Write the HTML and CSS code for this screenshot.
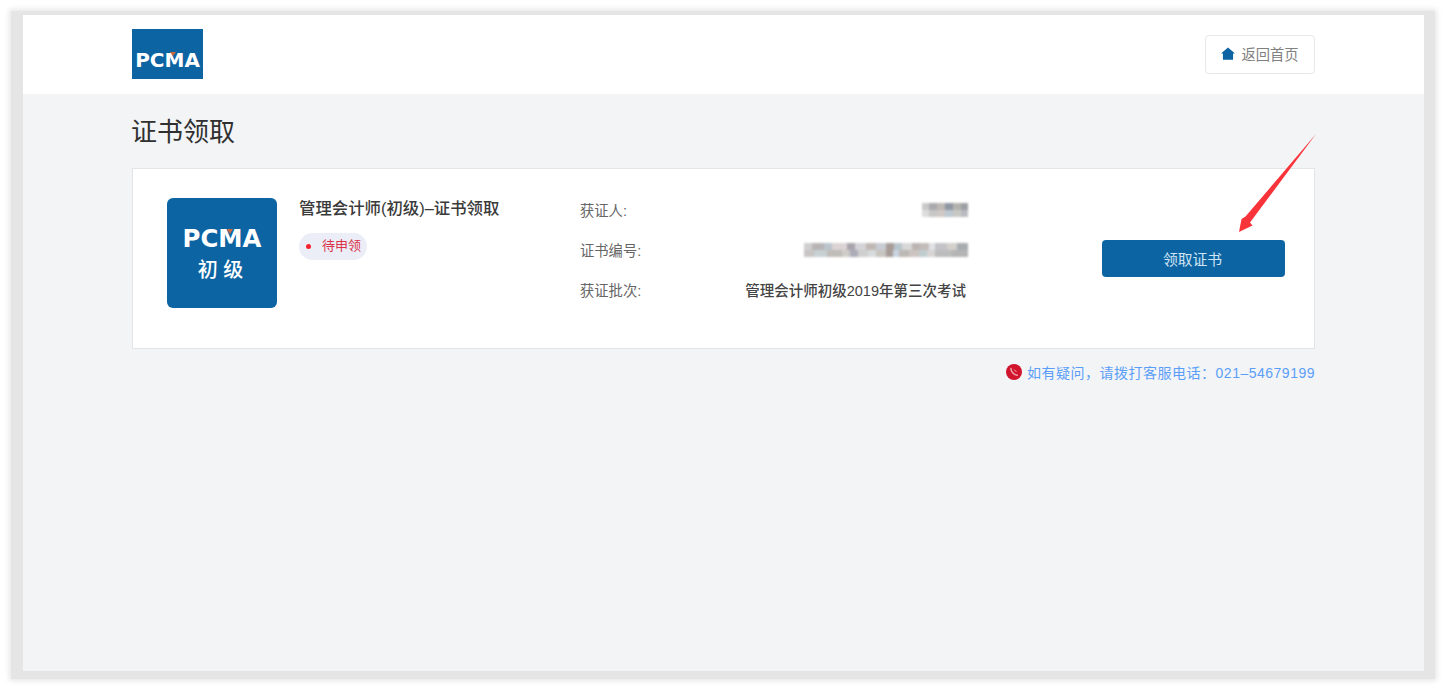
FILE: index.html
```html
<!DOCTYPE html>
<html lang="zh-CN">
<head>
<meta charset="utf-8">
<title>证书领取</title>
<link rel="stylesheet" href="styles.css">
</head>
<body>
<div class="shadow">
  <div class="screen">
    <header class="topbar">
      <div class="wrap topbar-inner">
        <div class="logo"><span class="logo-text">PCMA</span><i class="notch"></i></div>
        <a class="home-btn">
          <svg class="home-icon" viewBox="0 0 16 14" width="14" height="13"><path fill="#0d64a3" d="M8 0 L16 7 L13.8 7 L13.8 14 L2.2 14 L2.2 7 L0 7 Z"/></svg>
          <span>返回首页</span>
        </a>
      </div>
    </header>
    <main class="wrap">
      <h1 class="page-title">证书领取</h1>
      <section class="card">
        <div class="badge">
          <div class="badge-logo"><span class="badge-text">PCMA</span><i class="badge-notch"></i></div>
          <div class="badge-level">初 级</div>
        </div>
        <div class="summary">
          <div class="summary-title">管理会计师(初级)–证书领取</div>
          <div class="tag"><i class="dot"></i><span>待申领</span></div>
        </div>
        <div class="info">
          <div class="row"><span class="label">获证人:</span><span class="blur blur-name"></span></div>
          <div class="row"><span class="label">证书编号:</span><span class="blur blur-no"></span></div>
          <div class="row"><span class="label">获证批次:</span><span class="value">管理会计师初级2019年第三次考试</span></div>
        </div>
        <button class="claim">领取证书</button>
      </section>
      <div class="help">
        <svg class="phone" viewBox="0 0 16 16" width="16" height="16"><circle cx="8" cy="8" r="8" fill="#d0152c"/><path fill="none" stroke="#f0a7b0" stroke-width="1.5" stroke-linecap="round" d="M5 4.6 C4.8 7.6 8 11.2 11.3 11.2"/><path fill="none" stroke="#f0a7b0" stroke-width="1" d="M8 5.5 L10.5 8"/></svg>
        <span>如有疑问，请拨打客服电话：021–54679199</span>
      </div>
    </main>
    <svg class="arrow" viewBox="1236 130 84 106" width="84" height="106"><path fill="#f9333a" d="M1316 134 L1250 222.5 L1252.5 225.5 L1239 232 L1241.5 219 L1245.5 216.5 Z"/></svg>
  </div>
</div>
</body>
</html>
```
FILE: styles.css
```css
* { box-sizing: border-box; }
html, body { margin: 0; padding: 0; height: 100%; background: #fff; overflow: hidden; }
body {
  padding: 11px 13px 9px 11px;
  font-family: "Liberation Sans", "Noto Sans CJK SC", sans-serif;
  color: #333;
}
.shadow {
  height: 668px;
  padding: 4px 11px 8px 12px;
  background: #e5e5e5;
  box-shadow: 0 0 5px 2px #e8e8e8;
}
.screen {
  position: relative;
  height: 656px;
  background: #f3f4f6;
}
.wrap { width: 1183px; margin-left: 109px; }
.topbar { height: 79px; background: #fff; }
.topbar-inner { height: 79px; display: flex; justify-content: space-between; padding-top: 14px; }
.logo {
  position: relative;
  width: 71px;
  height: 50px;
  background: #0d64a3;
  display: flex;
  align-items: center;
  justify-content: center;
  padding-top: 11px;
}
.logo-text { font: 700 20px/1 "DejaVu Sans", sans-serif; color: #fff; }
.notch {
  position: absolute;
  left: 38px;
  top: 23px;
  border-left: 3px solid transparent;
  border-right: 3px solid transparent;
  border-top: 4px solid #c9683c;
}
.home-btn {
  margin-top: 6px;
  width: 110px;
  height: 39px;
  border: 1px solid #e8e8e8;
  border-radius: 4px;
  background: #fff;
  display: flex;
  align-items: center;
  justify-content: center;
  gap: 6px;
  padding-bottom: 2px;
  font-size: 14.3px;
  color: #808080;
}
.home-icon { flex: none; }
.page-title {
  margin: 0 0 0 -1px;
  height: 74px;
  padding-top: 18px;
  font-size: 26px;
  line-height: 40px;
  font-weight: 400;
  color: #303030;
}
.card {
  height: 181px;
  border: 1px solid #e3e4e6;
  background: #fff;
  display: flex;
  align-items: flex-start;
  padding: 29px 0 0 34px;
}
.badge {
  flex: none;
  width: 110px;
  height: 110px;
  border-radius: 6px;
  background: #0d64a3;
  color: #fff;
  display: flex;
  flex-direction: column;
  align-items: center;
  padding-top: 29px;
}
.badge-logo { position: relative; height: 24px; display: flex; align-items: center; }
.badge-text { font: 700 24.4px/24px "DejaVu Sans", sans-serif; color: #fff; }
.badge-notch {
  position: absolute;
  left: 44px;
  top: 2px;
  border-left: 3px solid transparent;
  border-right: 3px solid transparent;
  border-top: 5px solid #c9683c;
}
.badge-level { font-size: 20px; line-height: 26px; font-weight: 500; margin: 6px 3px 0 0; }
.summary { flex: none; width: 281px; margin-left: 22px; }
.summary-title { font-size: 16.4px; line-height: 20px; font-weight: 500; color: #3a3a3a; white-space: nowrap; }
.tag {
  margin-top: 15px;
  width: 68px;
  height: 27px;
  border-radius: 14px;
  background: #eceef7;
  display: flex;
  align-items: center;
  padding-left: 7px;
  gap: 11px;
  font-size: 13px;
  color: #d9324a;
}
.tag span { margin-top: -4px; }
.dot { width: 5px; height: 5px; border-radius: 50%; background: #f5222d; }
.info { flex: none; width: 388px; margin-top: -8px; }
.row { height: 40px; display: flex; justify-content: space-between; align-items: center; }
.label { font-size: 14.3px; color: #666; margin-top: -2px; }
.value { font-size: 14.5px; font-weight: 500; color: #444; margin: -2px 2px 0 0; white-space: nowrap; }
.blur {
  display: block;
  height: 14px;
  filter: blur(1px);
  background-size: 100% 50%, 100% 50%;
  background-repeat: no-repeat;
  background-position: top, bottom;
}
.blur-name {
  width: 46px;
  background-image:
    linear-gradient(90deg, #c9c9c9 0 16%, #a9a9ad 16% 33%, #bdb8b4 33% 50%, #8f97a3 50% 67%, #b4b2ae 67% 84%, #9c9fa3 84%),
    linear-gradient(90deg, #dcdcdc 0 16%, #c7c7c7 16% 33%, #d0c8c4 33% 50%, #bcc8d2 50% 67%, #c8c8c4 67% 84%, #b8bcc0 84%);
}
.blur-no {
  width: 164px;
  background-image:
    linear-gradient(90deg, #cfcfcf 0 5%, #b8b4b4 5% 12%, #b9c4cc 12% 17%, #dcd4d4 17% 26%, #a8a4ac 26% 31%, #d4d4d8 31% 38%, #c0b8b4 38% 44%, #c8ccd4 44% 50%, #a89c98 50% 55%, #b8c4cc 55% 60%, #d8d8d8 60% 66%, #bcb4b4 66% 71%, #c4bcb8 71% 76%, #e0e2e4 76% 80%, #c4c4c8 80% 87%, #d4d0cc 87% 93%, #a8acb0 93%),
    linear-gradient(90deg, #c8c4c4 0 6%, #c8d0d4 6% 14%, #c0bcb8 14% 23%, #d0ccc8 23% 28%, #acacb8 28% 33%, #cfcfd0 33% 39%, #d8dcdc 39% 44%, #c8c4c0 44% 50%, #a89c98 50% 54%, #c8d4e0 54% 58%, #bcb8b4 58% 64%, #ccc4c0 64% 70%, #c0ccd0 70% 75%, #d8d4d4 75% 80%, #bcbcbc 80% 90%, #b4b4b4 90%);
}
.claim {
  flex: none;
  width: 183px;
  height: 37px;
  margin: 42px 0 0 134px;
  padding: 0 2px 1px 0;
  border: 0;
  border-radius: 4px;
  background: #0d64a3;
  color: #cfe4f4;
  font: 400 14.8px "Noto Sans CJK SC", sans-serif;
}
.help {
  margin-top: 13px;
  height: 20px;
  display: flex;
  justify-content: flex-end;
  align-items: center;
  gap: 5px;
  font-size: 14px;
  color: #5b9ef9;
  letter-spacing: 0.5px;
  white-space: nowrap;
}
.phone { flex: none; }
.arrow { position: absolute; left: 1213px; top: 115px; }
```
